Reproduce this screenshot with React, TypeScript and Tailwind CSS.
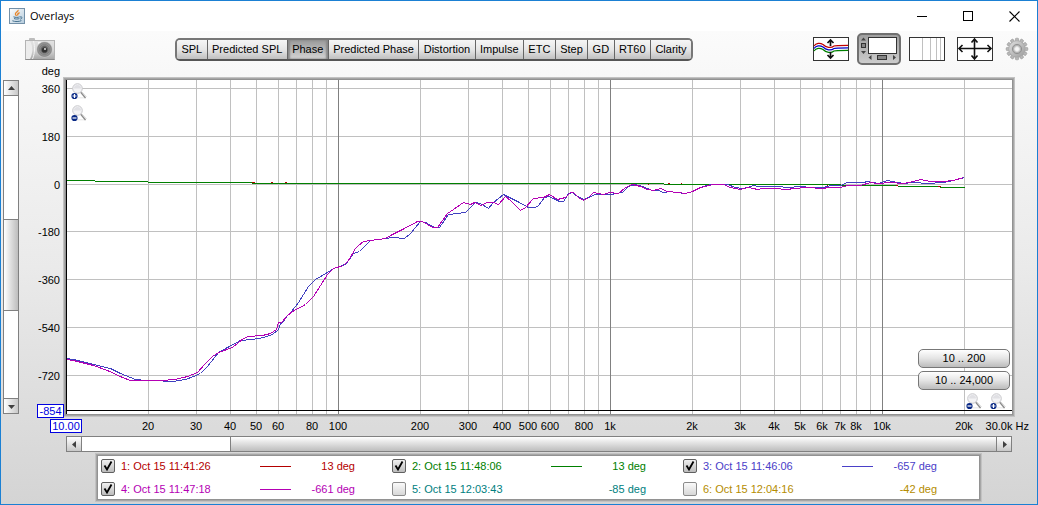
import React, { useState } from "react";

type Point = [number, number];

const PLOT_W = 946;
const PLOT_H = 334;
const DECADE = 272;

const TABS = ["SPL", "Predicted SPL", "Phase", "Predicted Phase", "Distortion", "Impulse", "ETC", "Step", "GD", "RT60", "Clarity"];

const freqX = (f: number) => Math.round(Math.log10(f / 10) * DECADE);
const degY = (v: number) => Math.floor(104 - (v * 47.8) / 180);

const X_GRID: number[] = [];
[10, 100, 1000, 10000].forEach((base) => {
  for (let i = 1; i < 10; i++) {
    const f = base * i;
    if (f > 10 && f < 30000) X_GRID.push(f);
  }
});

const X_LABELS = [20, 30, 40, 50, 60, 80, 100, 200, 300, 400, 500, 600, 800, 1000, 2000, 3000, 4000, 5000, 6000, 7000, 8000, 10000, 20000];
const Y_LABELS = [360, 180, 0, -180, -360, -540, -720];

const BLUE: Point[] = [
  [0, 278], [7, 279], [27, 284], [44, 288], [54, 293], [64, 297], [69, 299], [79, 300], [94, 300], [99, 301], [106, 301], [119, 299], [127, 296], [134, 293], [141, 286], [148, 277], [152, 272], [161, 267], [174, 260], [186, 259], [197, 257], [206, 254], [212, 249], [214, 243], [216, 242], [221, 235], [225, 231], [232, 222], [242, 206], [249, 199], [261, 192], [267, 188], [274, 186], [280, 183], [287, 173], [293, 171], [304, 160], [319, 158], [326, 157], [338, 158], [344, 153], [354, 141], [359, 142], [366, 146], [369, 147], [373, 147], [382, 134], [391, 133], [399, 132], [402, 129], [409, 122], [414, 123], [422, 128], [427, 122], [437, 114], [441, 116], [451, 121], [462, 127], [469, 127], [472, 125], [478, 117], [482, 116], [487, 118], [493, 121], [497, 121], [502, 113], [506, 112], [511, 116], [517, 119], [522, 117], [529, 114], [544, 114], [556, 112], [562, 106], [569, 104], [576, 106], [586, 110], [592, 110], [597, 112], [604, 111], [609, 112], [619, 113], [626, 111], [634, 107], [644, 104], [661, 104], [669, 107], [676, 108], [681, 107], [687, 105], [692, 106], [711, 106], [721, 107], [734, 106], [744, 107], [757, 107], [764, 105], [774, 105], [781, 102], [797, 102], [801, 101], [812, 103], [821, 100], [831, 102], [837, 103], [847, 102], [861, 103], [877, 102], [887, 100], [894, 98], [898, 97],
];

const MAGENTA: Point[] = [
  [0, 279], [7, 280], [27, 285], [41, 290], [56, 297], [64, 300], [94, 300], [109, 299], [121, 296], [131, 292], [139, 283], [146, 276], [152, 272], [166, 267], [177, 258], [182, 256], [196, 255], [204, 253], [210, 249], [212, 242], [215, 242], [221, 235], [226, 231], [239, 224], [247, 216], [254, 205], [261, 194], [267, 188], [277, 185], [282, 180], [289, 168], [292, 165], [297, 161], [304, 160], [319, 158], [326, 154], [336, 149], [351, 141], [356, 141], [366, 147], [371, 147], [381, 133], [387, 129], [397, 122], [404, 124], [408, 122], [415, 125], [420, 122], [427, 122], [432, 124], [439, 116], [444, 120], [454, 130], [459, 127], [467, 118], [477, 117], [483, 114], [491, 119], [499, 117], [504, 112], [507, 112], [512, 117], [517, 120], [522, 117], [527, 112], [537, 114], [543, 112], [552, 113], [559, 107], [566, 104], [574, 106], [581, 109], [587, 110], [594, 108], [601, 111], [611, 112], [619, 113], [626, 111], [634, 107], [647, 104], [657, 104], [664, 107], [674, 109], [681, 107], [687, 108], [691, 109], [697, 108], [707, 108], [721, 109], [727, 108], [741, 107], [756, 108], [762, 107], [774, 107], [781, 105], [794, 105], [804, 102], [811, 103], [824, 102], [837, 103], [847, 101], [854, 99], [864, 101], [877, 101], [887, 100], [897, 97],
];

const GREEN: Point[] = [
  [0, 100], [28, 100], [29, 101], [81, 101], [82, 102], [185, 102], [186, 103], [597, 103], [598, 104], [774, 104], [775, 105], [831, 105], [832, 106], [873, 106], [874, 107], [898, 107],
];

const RED_BITS: [number, number, number][] = [
  [186, 102, 3], [205, 102, 2], [219, 102, 2], [582, 104, 1], [602, 103, 2], [615, 103, 1], [761, 105, 1], [767, 105, 1], [830, 105, 2], [872, 106, 3],
];

const toPoints = (pts: Point[]) => pts.map(([x, y]) => `${x + 0.5},${y + 0.5}`).join(" ");
const freqLabel = (f: number) => (f >= 1000 ? `${f / 1000}k` : `${f}`);

function JavaIcon() {
  return (
    <svg viewBox="0 0 16 16" className="h-4 w-4" aria-hidden="true">
      <defs>
        <linearGradient id="java" x1="0" y1="0" x2="1" y2="1">
          <stop offset="0" stopColor="#fff" />
          <stop offset="1" stopColor="#b4cbdc" />
        </linearGradient>
      </defs>
      <rect x="0.5" y="0.5" width="15" height="15" fill="url(#java)" stroke="#7390a8" />
      <path d="M9 1.8c1 1.7-2.6 2.5-2.6 4.1 0 .8.6 1.3 1.2 2M10.6 4.6C9.2 5.2 8.2 6 8.8 7.6" fill="none" stroke="#e8862a" strokeWidth="1.3" />
      <path d="M4.5 8.8c1.8.8 4.7.8 6.2 0M5 10.5c1.5.7 4 .7 5.4 0M3.4 12.8c2.5 1 7 1 9-.2M11 9c2.6-.8 2.6 1.7.2 2.2" fill="none" stroke="#45718f" strokeWidth="1" />
    </svg>
  );
}

function CameraIcon() {
  return (
    <svg viewBox="0 0 30 22" className="h-[22px] w-[30px]" aria-hidden="true">
      <defs>
        <linearGradient id="cam" x1="0" y1="0" x2="0" y2="1">
          <stop offset="0" stopColor="#e2e2e2" />
          <stop offset="0.5" stopColor="#d6d6d6" />
          <stop offset="1" stopColor="#a6a6a6" />
        </linearGradient>
        <radialGradient id="lens">
          <stop offset="0" stopColor="#4a4a4a" />
          <stop offset="0.4" stopColor="#666" />
          <stop offset="0.6" stopColor="#9c9c9c" />
          <stop offset="0.85" stopColor="#8a8a8a" />
          <stop offset="1" stopColor="#c8c8c8" />
        </radialGradient>
      </defs>
      <rect x="4" y="0" width="6" height="3" rx="1" fill="#bdbdbd" />
      <rect x="0.5" y="2.5" width="29" height="19" fill="url(#cam)" stroke="#b4b4b4" />
      <path d="M1 3h4c3 5 3 12 0 18H1z" fill="#ececec" />
      <path d="M8.5 3c1.5 6 1.5 12-1 18" stroke="#f4f4f4" fill="none" />
      <path d="M0.5 21.5h29" stroke="#8a8a8a" />
      <rect x="13" y="4" width="4" height="2" fill="#f8f8f8" />
      <circle cx="19.5" cy="11.5" r="8" fill="url(#lens)" />
      <circle cx="19.5" cy="11.5" r="5" fill="none" stroke="#777" strokeWidth="0.8" />
      <circle cx="19.5" cy="12" r="2.6" fill="#333" />
      <circle cx="20" cy="11" r="0.9" fill="#f5f5f5" />
    </svg>
  );
}

function TracesIcon() {
  return (
    <svg viewBox="0 0 36 24" className="h-6 w-9" aria-hidden="true">
      <rect x="0.5" y="0.5" width="35" height="23" fill="#fff" stroke="#333" />
      <g fill="none" strokeWidth="1.2">
        <path d="M1 9c2-3 6-3.5 9-1.5 3 3 8 4 11 1.5 1-.6 2-.6 14-.6" stroke="#c00000" />
        <path d="M1 11.500c2-3 6-3.500 9-1.500 3 3 8 4 11 1.500 1-.6 2-.6 14-.6" stroke="#0000c8" />
        <path d="M1 14c2-3 6-3.500 9-1.500 3 3 8 4 11 1.500 1-.6 2-.6 14-.6" stroke="#008000" />
      </g>
      <path d="M17.500 9V3M14.500 6l3-3 3 3M17.500 15V21M14.500 18l3 3 3-3" fill="none" stroke="#111" strokeWidth="1.7" />
    </svg>
  );
}

function ScrollbarsIcon() {
  return (
    <svg viewBox="0 0 36 24" className="h-6 w-9" aria-hidden="true">
      <rect x="7.5" y="0.5" width="28" height="16" fill="#fff" stroke="#333" />
      <path d="M0 3.500h5L2.500 0.500zM0 14h5l-2.500 3z" fill="#444" />
      <rect x="0.5" y="6.5" width="4" height="4" fill="#858585" stroke="#333" />
      <rect x="16.5" y="18.5" width="9" height="4" fill="#858585" stroke="#333" />
      <path d="M10.500 18v5l-3-2.500zM32 18v5l3-2.500z" fill="#444" />
    </svg>
  );
}

function GridIcon() {
  return (
    <svg viewBox="0 0 36 24" className="h-6 w-9" shapeRendering="crispEdges" aria-hidden="true">
      <rect x="0.5" y="0.5" width="35" height="23" fill="#fff" stroke="#333" />
      <path d="M13.500 1v22M21.500 1v22M27.500 1v22M31.500 1v22" stroke="#c0c0c0" />
    </svg>
  );
}

function LimitsIcon() {
  return (
    <svg viewBox="0 0 36 24" className="h-6 w-9" aria-hidden="true">
      <rect x="0.5" y="0.5" width="35" height="23" fill="#fff" stroke="#333" />
      <path d="M2.500 11.500h31M17.500 2.500v19M5.500 8l-3.500 3.500 3.500 3.500M30.500 8l3.500 3.500-3.500 3.500M14.500 5.500l3-3.500 3 3.500M14.500 18.500l3 3.500 3-3.500" fill="none" stroke="#111" strokeWidth="1.6" />
    </svg>
  );
}

function GearIcon() {
  return (
    <svg viewBox="0 0 24 24" className="h-6 w-6" aria-hidden="true">
      <defs>
        <linearGradient id="gear" x1="0" y1="0" x2="1" y2="1">
          <stop offset="0" stopColor="#e0e0e0" />
          <stop offset="1" stopColor="#9c9c9c" />
        </linearGradient>
      </defs>
      <g fill="#b8b8b8" stroke="#8c8c8c" strokeWidth="0.5">
        {[0, 30, 60, 90, 120, 150, 180, 210, 240, 270, 300, 330].map((a) => (
          <rect key={a} x="10.4" y="1.2" width="3.2" height="5" rx="0.8" transform={`rotate(${a} 12 12)`} />
        ))}
      </g>
      <circle cx="12" cy="12" r="8.2" fill="url(#gear)" stroke="#a0a0a0" strokeWidth="0.5" />
      <circle cx="12" cy="12" r="4.6" fill="#b4b4b4" stroke="#888" strokeWidth="0.8" />
      <circle cx="12" cy="12" r="2.5" fill="#f6f6f6" stroke="#ddd" />
    </svg>
  );
}

function Magnifier({ sign }: { sign: "+" | "-" }) {
  return (
    <svg viewBox="0 0 16 17" className="h-[17px] w-4" aria-hidden="true">
      <path d="M3 14h12v1.500H3z" fill="#eee" />
      <path d="M9.500 9l5 6" stroke="#8a8a8a" strokeWidth="1.3" />
      <path d="M10.500 8.500l5 5.500" stroke="#ccc" strokeWidth="0.8" />
      <circle cx="6.5" cy="5.5" r="4.8" fill="#f3f3f5" stroke="#c8c8cc" />
      <path d="M3 5.500a3.500 3.500 0 0 1 7 0z" fill="#e0e0e4" />
      <circle cx="3.5" cy="13" r="3.1" fill="#0a2a86" />
      <path d={sign === "+" ? "M1.500 13h4M3.500 11v4" : "M1.500 13h4"} stroke="#fff" strokeWidth="1.2" />
    </svg>
  );
}

function IconButton({ label, children }: { label: string; children: React.ReactNode }) {
  return (
    <button type="button" aria-label={label} className="block">
      {children}
    </button>
  );
}

function ArrowGlyph({ dir }: { dir: "up" | "down" | "left" | "right" }) {
  const d = { up: "M1 6h7L4.5 2z", down: "M1 3h7L4.5 7z", left: "M6 1v7L2 4.5z", right: "M3 1v7l4-3.5z" }[dir];
  return (
    <svg viewBox="0 0 9 9" className="h-[9px] w-[9px]" aria-hidden="true">
      <path d={d} fill="#404040" />
    </svg>
  );
}

function VerticalScroll() {
  const btn = "flex h-4 shrink-0 items-center justify-center border border-[#808080] bg-linear-to-r from-white to-[#c8c8c8]";
  return (
    <div className="flex w-4 shrink-0 flex-col">
      <button type="button" aria-label="Scroll up" className={btn}><ArrowGlyph dir="up" /></button>
      <div className="flex flex-1 flex-col border-x border-[#808080] bg-white">
        <div style={{ flexGrow: 123 }} />
        <div className="border-y border-[#808080] bg-linear-to-r from-white to-[#bdbdbd]" style={{ flexGrow: 91 }} />
        <div style={{ flexGrow: 87 }} />
      </div>
      <button type="button" aria-label="Scroll down" className={btn}><ArrowGlyph dir="down" /></button>
    </div>
  );
}

function HorizontalScroll() {
  const btn = "flex w-4 shrink-0 items-center justify-center border border-[#808080] bg-linear-to-b from-white to-[#c8c8c8]";
  return (
    <div className="flex h-4">
      <button type="button" aria-label="Scroll left" className={btn}><ArrowGlyph dir="left" /></button>
      <div className="flex flex-1 border-y border-[#808080] bg-white">
        <div style={{ flexGrow: 148 }} />
        <div className="border-l border-[#808080] bg-linear-to-b from-white to-[#bdbdbd]" style={{ flexGrow: 765 }} />
      </div>
      <button type="button" aria-label="Scroll right" className={btn}><ArrowGlyph dir="right" /></button>
    </div>
  );
}

function Chart() {
  const rangeBtn = "h-[19px] w-[92px] rounded-[5px] border border-[#777] bg-linear-to-b from-white via-[#e4e4e4] to-[#bcbcbc] text-center leading-[17px]";
  return (
    <div className="relative h-full min-w-0 flex-1 bg-white shadow-[0_0_0_1px_#929292,0_0_0_2px_#a6a6a6,0_0_0_3px_#c2c2c2]">
      <svg viewBox={`0 0 ${PLOT_W} ${PLOT_H}`} preserveAspectRatio="none" shapeRendering="crispEdges" className="absolute inset-0 h-full w-full" role="img" aria-label="Phase in degrees against frequency">
        {Y_LABELS.map((v) => (
          <path key={v} d={`M0 ${degY(v) + 0.5}H${PLOT_W}`} stroke="#c0c0c0" />
        ))}
        {X_GRID.map((f) => (
          <path key={f} d={`M${freqX(f) + 0.5} 0V${PLOT_H}`} stroke={f === 100 || f === 1000 || f === 10000 ? "#808080" : "#c0c0c0"} />
        ))}
        <path d={`M0 330.5H${PLOT_W}`} stroke="#000" />
        <g fill="none">
          <polyline points={toPoints(GREEN)} stroke="#008000" />
          {RED_BITS.map(([x, y, w]) => (
            <rect key={x} x={x} y={y} width={w} height="1" fill="#b40000" />
          ))}
          <polyline points={toPoints(BLUE)} stroke="#4040c0" />
          <polyline points={toPoints(MAGENTA)} stroke="#b400b4" />
        </g>
        <path d={`M0.5 0V${PLOT_H}`} stroke="#000" />
      </svg>
      <div className="absolute left-[5px] top-[3px] flex flex-col gap-[5px]">
        <IconButton label="Zoom in vertically"><Magnifier sign="+" /></IconButton>
        <IconButton label="Zoom out vertically"><Magnifier sign="-" /></IconButton>
      </div>
      <div className="absolute bottom-1 right-[2px] flex flex-col items-end gap-[3px]">
        <button type="button" className={rangeBtn}>10 .. 200</button>
        <button type="button" className={rangeBtn}>10 .. 24,000</button>
        <div className="flex gap-2 pr-1">
          <IconButton label="Zoom out horizontally"><Magnifier sign="-" /></IconButton>
          <IconButton label="Zoom in horizontally"><Magnifier sign="+" /></IconButton>
        </div>
      </div>
    </div>
  );
}

interface Trace {
  name: string;
  value: string;
  text: string;
  line: string;
  on: boolean;
}

const TRACES: Trace[] = [
  { name: "1: Oct 15 11:41:26", value: "13 deg", text: "text-[#b40000]", line: "bg-[#b40000]", on: true },
  { name: "2: Oct 15 11:48:06", value: "13 deg", text: "text-[#008000]", line: "bg-[#008000]", on: true },
  { name: "3: Oct 15 11:46:06", value: "-657 deg", text: "text-[#4a40c8]", line: "bg-[#4a40c8]", on: true },
  { name: "4: Oct 15 11:47:18", value: "-661 deg", text: "text-[#b400b4]", line: "bg-[#b400b4]", on: true },
  { name: "5: Oct 15 12:03:43", value: "-85 deg", text: "text-[#008080]", line: "bg-[#008080]", on: false },
  { name: "6: Oct 15 12:04:16", value: "-42 deg", text: "text-[#b48c00]", line: "bg-[#b48c00]", on: false },
];

function LegendItem({ trace }: { trace: Trace }) {
  const [on, setOn] = useState(trace.on);
  return (
    <div className={`flex items-center pr-[37px] ${trace.text}`}>
      <label className="flex flex-1 items-center gap-1.5">
        <span className="relative h-[14px] w-[14px]">
          <input type="checkbox" checked={on} onChange={() => setOn(!on)} className={on ? "block h-[14px] w-[14px] appearance-none rounded-[2px] border border-[#606060] bg-linear-to-b from-[#f0f0f0] to-[#bcbcbc]" : "block h-[14px] w-[14px] appearance-none rounded-[2px] border border-[#8c8c8c] bg-linear-to-b from-[#fafafa] to-[#d8d8d8]"} />
          {on && (
            <svg viewBox="0 0 14 14" className="pointer-events-none absolute inset-0 h-[14px] w-[14px]" aria-hidden="true">
              <path d="M3.500 6.500l2.500 4 4.500-8" fill="none" stroke="#000" strokeWidth="1.8" />
            </svg>
          )}
        </span>
        <span>{trace.name}</span>
      </label>
      {on && <span className={`h-px w-[31px] ${trace.line}`} />}
      <span className="w-16 text-right">{trace.value}</span>
    </div>
  );
}

export default function App() {
  const [tab, setTab] = useState("Phase");
  return (
    <div className="flex h-screen flex-col border border-[#1b80d3] bg-white font-['Liberation_Sans',Arial,sans-serif] text-[11px] text-black">
      <header className="flex h-[30px] shrink-0 items-center justify-between pl-2">
        <div className="flex items-center gap-[5px] font-['Open_Sans','Segoe_UI',sans-serif] text-[11px]">
          <JavaIcon />
          <h1>Overlays</h1>
        </div>
        <div className="flex">
          <button type="button" aria-label="Minimize" className="flex w-[46px] justify-center">
            <svg viewBox="0 0 11 11" className="h-[11px] w-[11px]"><path d="M0 5.500h10" stroke="#000" /></svg>
          </button>
          <button type="button" aria-label="Maximize" className="flex w-[46px] justify-center">
            <svg viewBox="0 0 11 11" className="h-[11px] w-[11px]"><rect x="0.5" y="0.5" width="9" height="9" fill="none" stroke="#000" /></svg>
          </button>
          <button type="button" aria-label="Close" className="flex w-[46px] justify-center">
            <svg viewBox="0 0 11 11" className="h-[11px] w-[11px]"><path d="M0.500 0.500l10 10M10.500 0.500l-10 10" stroke="#000" strokeWidth="1.1" /></svg>
          </button>
        </div>
      </header>

      <main className="flex flex-1 flex-col bg-linear-to-b from-[#fbfbfb] via-[#eaeaea] to-[#d4d4d4] pb-[5px]">
        <div className="flex h-9 shrink-0 items-center justify-between pl-6 pr-2">
          <IconButton label="Capture graph"><CameraIcon /></IconButton>
          <nav className="flex h-[23px] w-[518px] overflow-hidden rounded-[5px] border-2 border-x-[#777] border-b-[#555] border-t-[#777]">
            {TABS.map((t, i) => (
              <button
                key={t}
                type="button"
                onClick={() => setTab(t)}
                className={`flex-auto px-1 leading-[19px] ${i > 0 ? "border-l border-[#666]" : ""} ${t === tab ? "bg-linear-to-b from-[#999] via-[#b8b8b8] to-[#d4d4d4] shadow-[inset_2px_0_2px_#888,inset_-2px_0_2px_#888]" : "bg-linear-to-b from-[#f6f6f6] via-[#e6e6e6] to-[#c0c0c0]"}`}
              >
                {t}
              </button>
            ))}
          </nav>
          <div className="flex items-center gap-2">
            <IconButton label="Separate traces"><TracesIcon /></IconButton>
            <button type="button" aria-label="Scrollbars" aria-pressed="true" className="rounded-[5px] border-2 border-[#707070] bg-linear-to-b from-[#a0a0a0] to-[#cccccc] p-[2px]">
              <ScrollbarsIcon />
            </button>
            <IconButton label="Frequency axis"><GridIcon /></IconButton>
            <span className="flex items-center gap-3 pl-1">
              <IconButton label="Limits"><LimitsIcon /></IconButton>
              <IconButton label="Controls"><GearIcon /></IconButton>
            </span>
          </div>
        </div>
        <div className="h-[13px] w-[59px] text-right leading-[8px]">deg</div>

        <div className="flex min-h-0 flex-1 pl-[2px] pr-[25px]">
          <VerticalScroll />
          <div className="relative w-[47px] shrink-0">
            {Y_LABELS.map((v) => (
              <span key={v} className="absolute right-1.5 -translate-y-1/2 leading-3" style={{ top: `${((degY(v) + 1) / PLOT_H) * 100}%` }}>
                {v}
              </span>
            ))}
            <input aria-label="Lower limit" defaultValue="-854" className="absolute right-0.5 z-10 h-[14px] w-[27px] -translate-y-1/2 border border-[#0000e0] bg-white text-center text-[#0000e0] outline-none" style={{ top: `${(331 / PLOT_H) * 100}%` }} />
          </div>
          <Chart />
        </div>

        <div className="pl-[65px] pr-[25px]">
          <div className="relative h-[22px]">
            <input aria-label="Lowest frequency" defaultValue="10.00" className="absolute left-0 top-[5px] h-[14px] w-8 -translate-x-1/2 border border-[#0000e0] bg-white text-center text-[#0000e0] outline-none" />
            {X_LABELS.map((f) => (
              <span key={f} className="absolute top-1.5 -translate-x-1/2 leading-3" style={{ left: `${(freqX(f) / PLOT_W) * 100}%` }}>
                {freqLabel(f)}
              </span>
            ))}
            <span className="absolute -right-[17px] top-1.5 whitespace-nowrap leading-3">30.0k Hz</span>
          </div>
          <HorizontalScroll />
        </div>

        <section aria-label="Traces" className="ml-[97px] mr-[58px] mt-1 grid auto-rows-[20px] grid-cols-3 gap-y-[3px] bg-white pl-[3px] pr-[5px] shadow-[0_0_0_1px_#929292,0_0_0_2px_#a6a6a6,0_0_0_3px_#c2c2c2]">
          {TRACES.map((t) => (
            <LegendItem key={t.name} trace={t} />
          ))}
        </section>
      </main>
    </div>
  );
}
